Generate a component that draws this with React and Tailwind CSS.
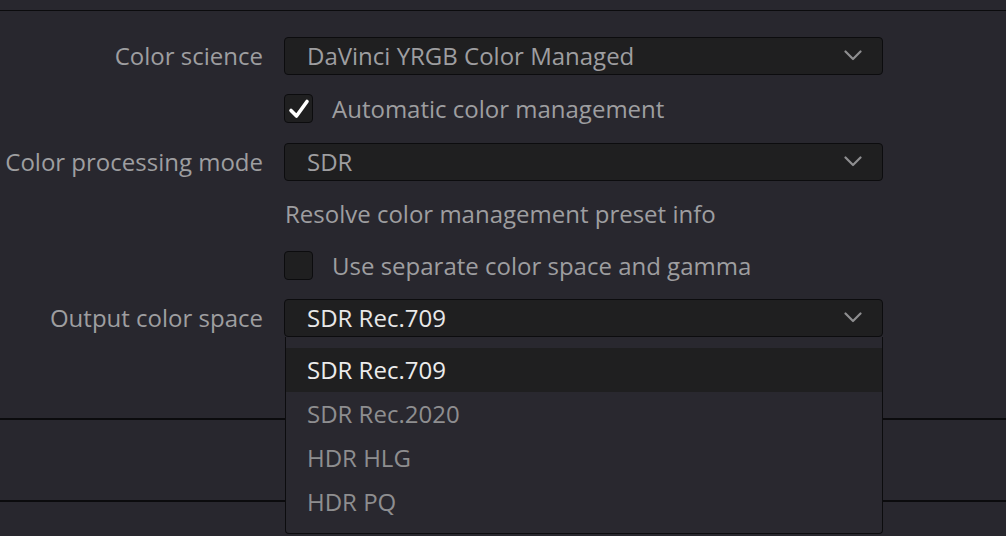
import React from "react";

const font = { fontFamily: '"Open Sans", "Noto Sans", sans-serif' };

const Chevron = () => (
  <svg width="18" height="11" viewBox="0 0 18 11" className="shrink-0">
    <path d="M1.5 1.5 L9 9 L16.5 1.5" fill="none" stroke="#8e8e90" strokeWidth="2.2" strokeLinecap="round" strokeLinejoin="round" />
  </svg>
);

const Select = ({ value, bright, children }) => (
  <div className="relative w-[599px]">
    <div className="h-[38px] flex items-center justify-between pl-[22px] pr-[20px] bg-[#1f1f20] border border-[#0c0c0e] rounded-[4px]">
      <span className={`text-[24px] leading-none ${bright ? "text-[#e8e8e8]" : "text-[#9e9ea0]"}`}>{value}</span>
      <Chevron />
    </div>
    {children}
  </div>
);

const Checkbox = ({ checked, label }) => (
  <div className="flex items-center gap-[19px]">
    <div className="w-[29px] h-[29px] rounded-[4px] bg-[#1f1f20] border border-[#0c0c0e] flex items-center justify-center">
      {checked && (
        <svg width="22" height="22" viewBox="0 0 22 22">
          <path d="M3 12.5 L8.5 18 L19 3.5" fill="none" stroke="#ffffff" strokeWidth="3.6" strokeLinecap="round" strokeLinejoin="round" />
        </svg>
      )}
    </div>
    <span className="text-[24px] leading-none text-[#9e9ea0]">{label}</span>
  </div>
);

const Label = ({ children }) => (
  <div className="w-[263px] text-right text-[24px] leading-none text-[#9e9ea0] shrink-0 whitespace-nowrap">{children}</div>
);

const options = ["SDR Rec.709", "SDR Rec.2020", "HDR HLG", "HDR PQ"];

export default function App() {
  return (
    <div className="w-[1006px] h-[536px] bg-[#28272e] overflow-hidden relative" style={font}>
      <div className="h-[10px]" />
      <div className="h-[410px] border-t border-b-2 border-[#0b0b0d] flex flex-col pt-[18px]">
        <div className="h-[53px] flex items-center gap-[21px]">
          <Label>Color science</Label>
          <Select value="DaVinci YRGB Color Managed" />
        </div>
        <div className="h-[53px] flex items-center">
          <div className="w-[284px]" />
          <Checkbox checked label="Automatic color management" />
        </div>
        <div className="h-[53px] flex items-center gap-[21px]">
          <Label>Color processing mode</Label>
          <Select value="SDR" />
        </div>
        <div className="h-[52px] flex items-center">
          <div className="w-[285px]" />
          <span className="text-[24px] leading-none text-[#9e9ea0]">Resolve color management preset info</span>
        </div>
        <div className="h-[51px] flex items-center">
          <div className="w-[284px]" />
          <Checkbox label="Use separate color space and gamma" />
        </div>
        <div className="h-[53px] flex items-center gap-[21px] relative z-10">
          <Label>Output color space</Label>
          <Select value="SDR Rec.709" bright>
            <div className="absolute left-[1px] top-[38px] w-[598px] h-[197px] bg-[#29282f] border border-t-0 border-[#0c0c0e] rounded-b-[4px] pt-[11px]">
              {options.map((o, i) => (
                <div
                  key={o}
                  className={`h-[44px] flex items-center pl-[21px] text-[24px] leading-none ${
                    i === 0 ? "bg-[#1f1f20] text-[#ececec]" : "text-[#8e8e90]"
                  }`}
                >
                  {o}
                </div>
              ))}
            </div>
          </Select>
        </div>
      </div>
      <div className="h-[82px] border-b-2 border-[#0b0b0d]" />
    </div>
  );
}
